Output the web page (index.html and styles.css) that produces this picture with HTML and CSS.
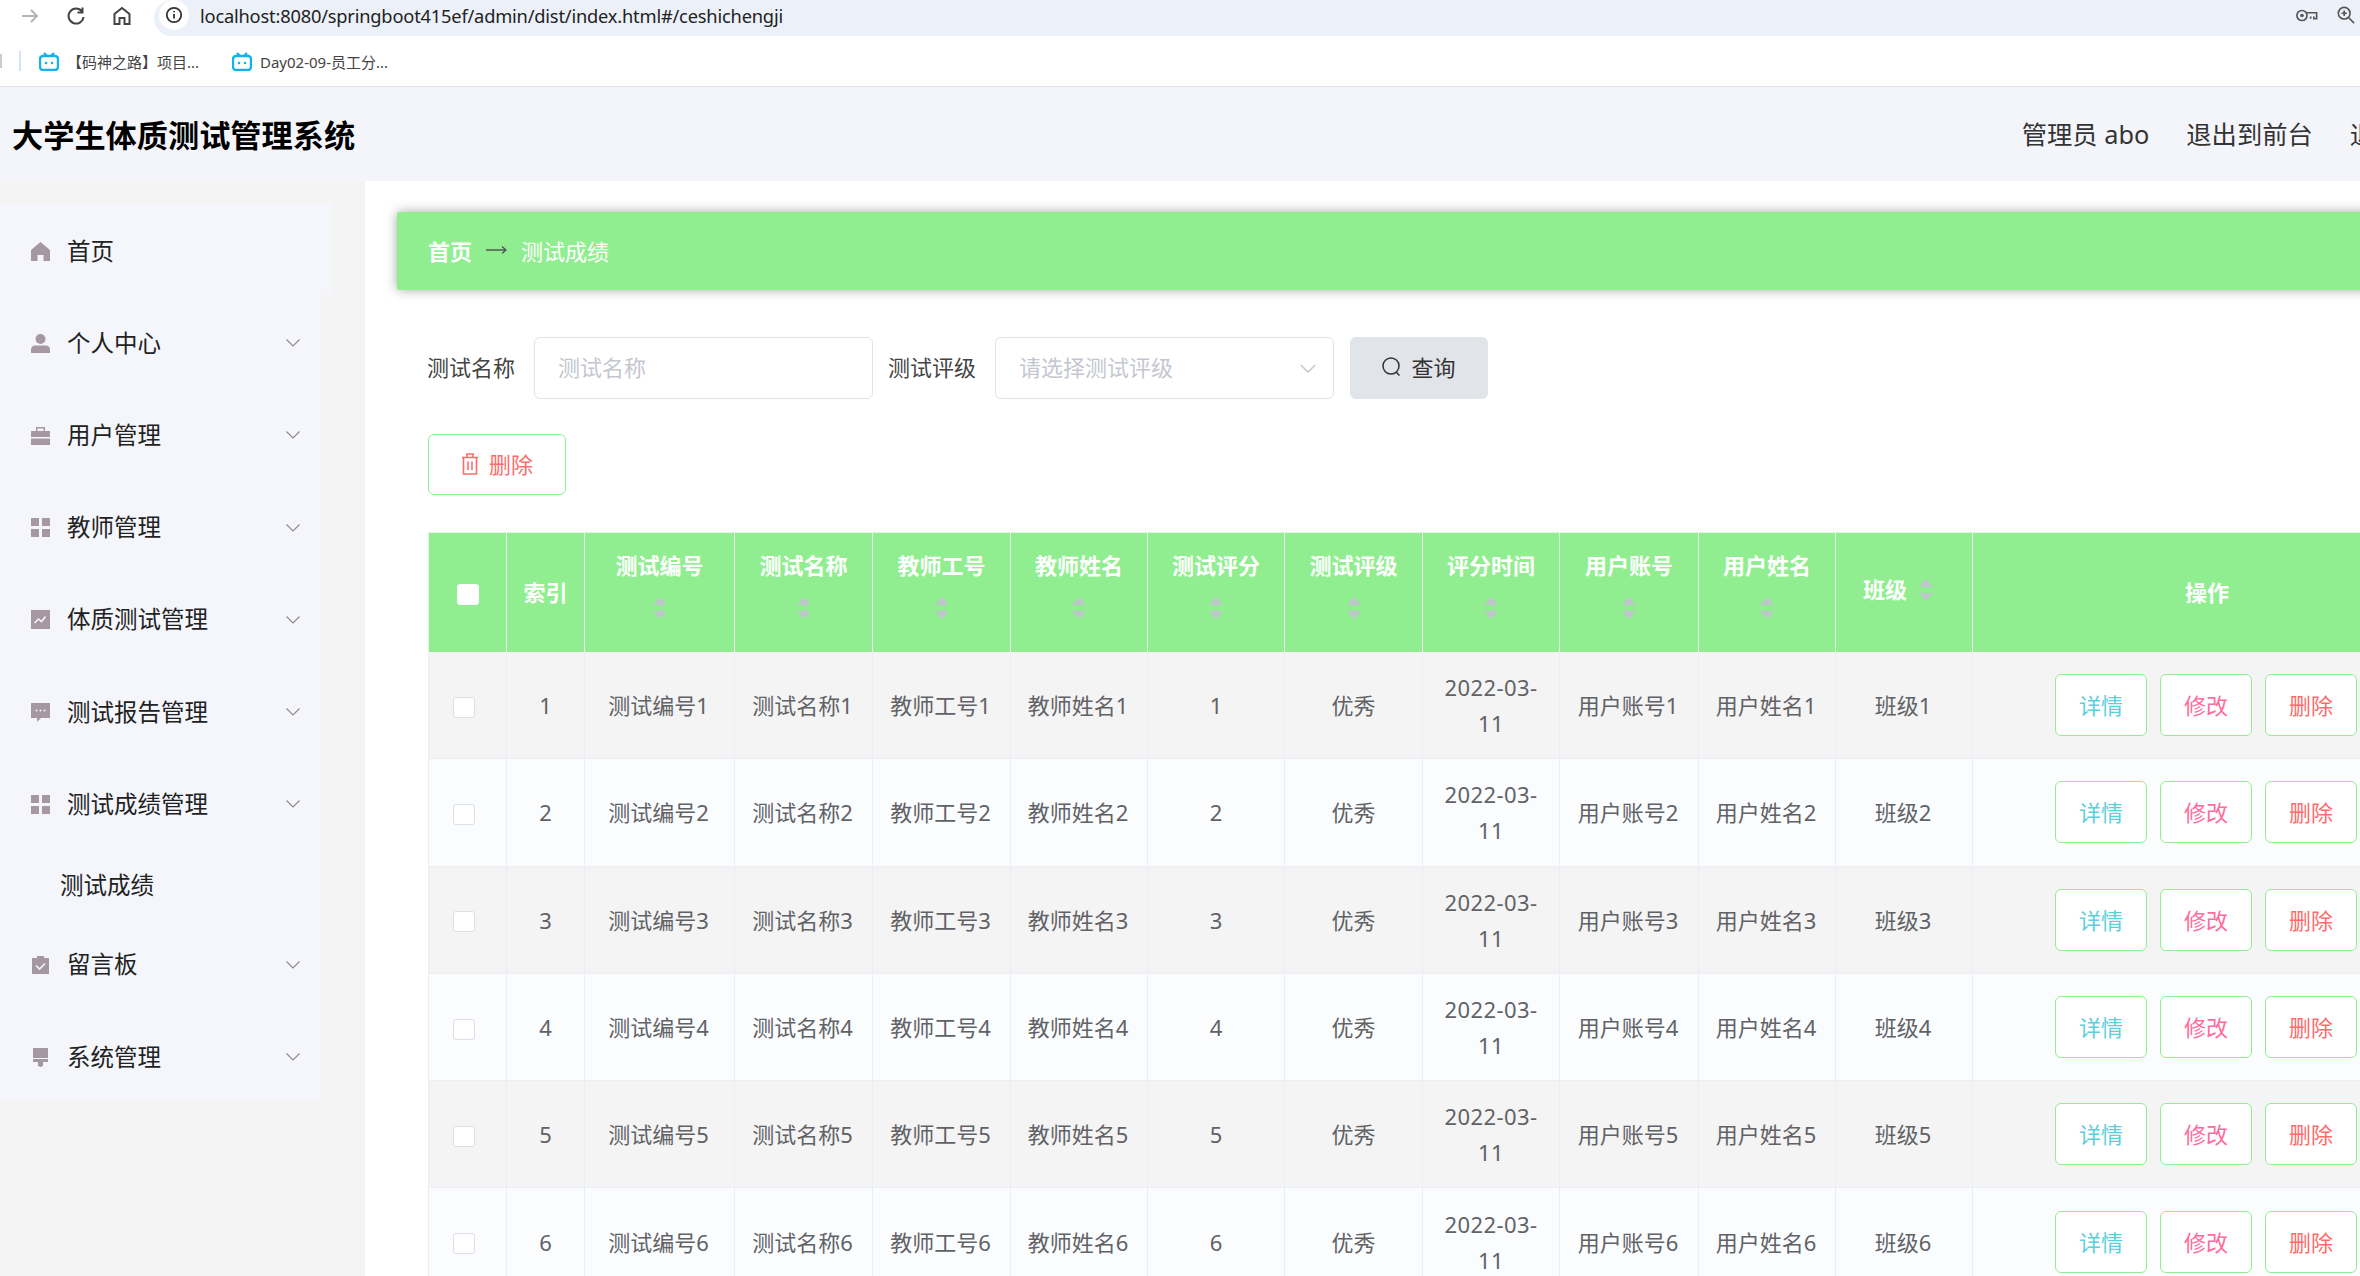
FILE: index.html
```html
<!DOCTYPE html>
<html lang="zh-CN">
<head>
<meta charset="utf-8">
<title>大学生体质测试管理系统</title>
<link rel="stylesheet" href="styles.css">
</head>
<body>
<div class="chrome-top">
  <div class="nav-icons">
    <svg class="nav-icon nav-back" viewBox="0 0 20 20"><path d="M2 10h15M11 4l6 6-6 6"/></svg>
    <svg class="nav-icon" viewBox="0 0 20 20"><path d="M16 5.5A7.5 7.5 0 1 0 17.5 11M16.5 1.5v5h-5"/></svg>
    <svg class="nav-icon" viewBox="0 0 20 20"><path d="M2.5 18V8L10 2l7.5 6v10h-5v-6h-5v6z"/></svg>
  </div>
  <div class="url-pill">
    <span class="info-badge"><svg class="info-icon" viewBox="0 0 20 20"><circle cx="10" cy="10" r="8"/><path d="M10 9v5M10 5.5v1.5"/></svg></span>
    <span class="url-text">localhost:8080/springboot415ef/admin/dist/index.html#/ceshichengji</span>
    <span class="url-tools">
      <svg class="tool-key" viewBox="0 0 24 14"><circle cx="6.5" cy="7" r="5.5"/><circle class="solid" cx="6.5" cy="7" r="2"/><path d="M12 4h10.5v6.5h-3V8M16 8v2.5"/></svg>
      <svg class="tool-zoom" viewBox="0 0 20 20"><circle cx="8" cy="8" r="6.5"/><path d="M13 13l6 6M8 5v6M5 8h6"/></svg>
    </span>
  </div>
</div>
<div class="bookmarks">
  <span class="bm-stub"></span>
  <span class="bm-sep"></span>
  <span class="bm-item"><svg class="bili" viewBox="0 0 20 19"><path class="ear" d="M5 1l3 3M15 1l-3 3"/><rect x="1" y="4" width="18" height="14" rx="3"/><circle class="dot" cx="7" cy="11" r="1.3"/><circle class="dot" cx="13" cy="11" r="1.3"/></svg>【码神之路】项目...</span>
  <span class="bm-item"><svg class="bili" viewBox="0 0 20 19"><path class="ear" d="M5 1l3 3M15 1l-3 3"/><rect x="1" y="4" width="18" height="14" rx="3"/><circle class="dot" cx="7" cy="11" r="1.3"/><circle class="dot" cx="13" cy="11" r="1.3"/></svg>Day02-09-员工分...</span>
</div>
<header class="topbar">
  <h1 class="brand">大学生体质测试管理系统</h1>
  <nav class="top-links">
    <span>管理员 abo</span>
    <span>退出到前台</span>
    <span>退出登录</span>
  </nav>
</header>
<div class="layout">
  <aside class="aside">
    <ul class="menu">
      <li class="menu-item menu-home"><svg class="mi" viewBox="0 0 19 19"><path d="M9.5 0L19 8v11h-6.5v-6h-6v6H0V8z"/></svg><span>首页</span></li>
      <li class="menu-item"><svg class="mi" viewBox="0 0 19 19"><circle cx="9.5" cy="5" r="5"/><path d="M0 19v-3.5C0 13 2 11.500 4 11.500h11c2 0 4 1.500 4 4V19z"/></svg><span>个人中心</span><svg class="chev" viewBox="0 0 14 8"><path d="M.5.5L7 7 13.500.5"/></svg></li>
      <li class="menu-item"><svg class="mi" viewBox="0 0 19 19"><path d="M5 5V1h9v4h-1.500V2.500h-6V5zM0 5h19v6H0zM0 12.500h19V19H0z"/></svg><span>用户管理</span><svg class="chev" viewBox="0 0 14 8"><path d="M.5.5L7 7 13.500.5"/></svg></li>
      <li class="menu-item"><svg class="mi" viewBox="0 0 19 19"><path d="M0 0h8v8H0zM11 0h8v8h-8zM0 11h8v8H0zM11 11h8v8h-8z"/></svg><span>教师管理</span><svg class="chev" viewBox="0 0 14 8"><path d="M.5.5L7 7 13.500.5"/></svg></li>
      <li class="menu-item"><svg class="mi" viewBox="0 0 19 19"><path d="M0 0h19v19H0z"/><path class="mi-cut" d="M3.500 13l4-4 3 2.500 4-5"/></svg><span>体质测试管理</span><svg class="chev" viewBox="0 0 14 8"><path d="M.5.5L7 7 13.500.5"/></svg></li>
      <li class="menu-item"><svg class="mi" viewBox="0 0 19 19"><path d="M0 0h19v15H10l-4 4v-4H0z"/><circle class="mi-dot" cx="5.500" cy="7.500" r="1"/><circle class="mi-dot" cx="9.500" cy="7.500" r="1"/><circle class="mi-dot" cx="13.500" cy="7.500" r="1"/></svg><span>测试报告管理</span><svg class="chev" viewBox="0 0 14 8"><path d="M.5.5L7 7 13.500.5"/></svg></li>
      <li class="menu-item"><svg class="mi" viewBox="0 0 19 19"><path d="M0 0h8v8H0zM11 0h8v8h-8zM0 11h8v8H0zM11 11h8v8h-8z"/></svg><span>测试成绩管理</span><svg class="chev" viewBox="0 0 14 8"><path d="M.5.5L7 7 13.500.5"/></svg></li>
      <li class="menu-sub">测试成绩</li>
      <li class="menu-item"><svg class="mi" viewBox="0 0 19 19"><path d="M1 3h5V1h7v2h5v16H1z"/><path class="mi-cut" d="M5 10.500l3.500 3.500 5.500-5.500"/></svg><span>留言板</span><svg class="chev" viewBox="0 0 14 8"><path d="M.5.5L7 7 13.500.5"/></svg></li>
      <li class="menu-item"><svg class="mi" viewBox="0 0 19 19"><path d="M2 0h15v10H2zM2 11h15v3h-5v4l-2.500 1L7 18v-4H2z"/></svg><span>系统管理</span><svg class="chev" viewBox="0 0 14 8"><path d="M.5.5L7 7 13.500.5"/></svg></li>
    </ul>
  </aside>
  <main class="main">
    <div class="crumb">
      <strong>首页</strong>
      <svg class="crumb-arrow" viewBox="0 0 21 10"><path d="M0 5h20M16 1.500L20 5l-4 3.500"/></svg>
      <span>测试成绩</span>
    </div>
    <form class="filters">
      <label class="f-label">测试名称</label>
      <div class="f-input f-name">测试名称</div>
      <label class="f-label">测试评级</label>
      <div class="f-input f-select">请选择测试评级<svg class="f-chev" viewBox="0 0 20 11"><path d="M1 1l9 9 9-9"/></svg></div>
      <button type="button" class="btn-search"><svg class="search-ic" viewBox="0 0 19 20"><circle cx="9" cy="9" r="8"/><path d="M14 15l3.500 3.500"/></svg>查询</button>
    </form>
    <button type="button" class="btn-remove"><svg class="trash" viewBox="0 0 18 22"><path d="M1 4.500h16M6 4.500V1h6v3.500M2.500 4.500V21h13V4.500M7 8.500v8.500M11 8.500v8.500"/></svg>删除</button>
    <table class="grid">
      <colgroup>
        <col class="c79"><col class="c78"><col class="c150"><col class="c138"><col class="c138"><col class="c137"><col class="c137"><col class="c138"><col class="c137"><col class="c139"><col class="c137"><col class="c137"><col class="c469">
      </colgroup>
      <thead>
        <tr>
          <th><span class="check check-head"></span></th>
          <th>索引</th>
          <th>测试编号<span class="sort"><i class="up"></i><i class="down"></i></span></th>
          <th>测试名称<span class="sort"><i class="up"></i><i class="down"></i></span></th>
          <th>教师工号<span class="sort"><i class="up"></i><i class="down"></i></span></th>
          <th>教师姓名<span class="sort"><i class="up"></i><i class="down"></i></span></th>
          <th>测试评分<span class="sort"><i class="up"></i><i class="down"></i></span></th>
          <th>测试评级<span class="sort"><i class="up"></i><i class="down"></i></span></th>
          <th>评分时间<span class="sort"><i class="up"></i><i class="down"></i></span></th>
          <th>用户账号<span class="sort"><i class="up"></i><i class="down"></i></span></th>
          <th>用户姓名<span class="sort"><i class="up"></i><i class="down"></i></span></th>
          <th>班级<span class="sort"><i class="up"></i><i class="down"></i></span></th>
          <th>操作</th>
        </tr>
      </thead>
      <tbody>
        <tr><td><span class="check"></span></td><td>1</td><td>测试编号1</td><td>测试名称1</td><td>教师工号1</td><td>教师姓名1</td><td>1</td><td>优秀</td><td class="date">2022-03-<br>11</td><td>用户账号1</td><td>用户姓名1</td><td>班级1</td><td><div class="ops"><button type="button" class="op op-view">详情</button><button type="button" class="op op-edit">修改</button><button type="button" class="op op-del">删除</button></div></td></tr>
        <tr><td><span class="check"></span></td><td>2</td><td>测试编号2</td><td>测试名称2</td><td>教师工号2</td><td>教师姓名2</td><td>2</td><td>优秀</td><td class="date">2022-03-<br>11</td><td>用户账号2</td><td>用户姓名2</td><td>班级2</td><td><div class="ops"><button type="button" class="op op-view">详情</button><button type="button" class="op op-edit">修改</button><button type="button" class="op op-del">删除</button></div></td></tr>
        <tr><td><span class="check"></span></td><td>3</td><td>测试编号3</td><td>测试名称3</td><td>教师工号3</td><td>教师姓名3</td><td>3</td><td>优秀</td><td class="date">2022-03-<br>11</td><td>用户账号3</td><td>用户姓名3</td><td>班级3</td><td><div class="ops"><button type="button" class="op op-view">详情</button><button type="button" class="op op-edit">修改</button><button type="button" class="op op-del">删除</button></div></td></tr>
        <tr><td><span class="check"></span></td><td>4</td><td>测试编号4</td><td>测试名称4</td><td>教师工号4</td><td>教师姓名4</td><td>4</td><td>优秀</td><td class="date">2022-03-<br>11</td><td>用户账号4</td><td>用户姓名4</td><td>班级4</td><td><div class="ops"><button type="button" class="op op-view">详情</button><button type="button" class="op op-edit">修改</button><button type="button" class="op op-del">删除</button></div></td></tr>
        <tr><td><span class="check"></span></td><td>5</td><td>测试编号5</td><td>测试名称5</td><td>教师工号5</td><td>教师姓名5</td><td>5</td><td>优秀</td><td class="date">2022-03-<br>11</td><td>用户账号5</td><td>用户姓名5</td><td>班级5</td><td><div class="ops"><button type="button" class="op op-view">详情</button><button type="button" class="op op-edit">修改</button><button type="button" class="op op-del">删除</button></div></td></tr>
        <tr><td><span class="check"></span></td><td>6</td><td>测试编号6</td><td>测试名称6</td><td>教师工号6</td><td>教师姓名6</td><td>6</td><td>优秀</td><td class="date">2022-03-<br>11</td><td>用户账号6</td><td>用户姓名6</td><td>班级6</td><td><div class="ops"><button type="button" class="op op-view">详情</button><button type="button" class="op op-edit">修改</button><button type="button" class="op op-del">删除</button></div></td></tr>
      </tbody>
    </table>
  </main>
</div>
</body>
</html>
```

FILE: styles.css
```css
* { box-sizing: border-box; }
html, body { margin: 0; padding: 0; height: 1276px; overflow: hidden; background: #fff; }
body { width: 2360px; font-family: "Noto Sans", "Noto Sans CJK SC", sans-serif; color: #333; }
ul { list-style: none; margin: 0; padding: 0; }

/* browser chrome */
.chrome-top { display: flex; height: 36px; background: #fff; }
.nav-icons { display: flex; align-items: center; width: 154px; padding: 0 0 5px 20px; gap: 26px; }
.nav-icon { width: 20px; height: 20px; fill: none; stroke: #444; stroke-width: 2; }
.nav-back { stroke: #b4b4b4; }
.url-pill { flex: 1; display: flex; align-items: center; padding-bottom: 6px; background: #ebf0f9; border-top-left-radius: 18px; border-bottom-left-radius: 18px; }
.info-badge { width: 30px; height: 30px; margin-left: 5px; margin-right: 1px; border-radius: 50%; background: #fff; display: flex; align-items: center; justify-content: center; }
.info-icon { width: 18px; height: 18px; fill: none; stroke: #333; stroke-width: 2; }
.url-text { margin-left: 10px; font-size: 18.300px; color: #222; white-space: nowrap; letter-spacing: -.2px; }
.url-tools { margin-left: auto; display: flex; align-items: center; gap: 19px; padding-right: 5px; }
.tool-key { width: 22px; height: 13px; fill: none; stroke: #555; stroke-width: 1.8; }
.tool-key .solid { fill: #555; stroke: none; }
.tool-zoom { width: 18px; height: 18px; fill: none; stroke: #555; stroke-width: 1.8; }

.bookmarks { display: flex; align-items: center; height: 51px; border-bottom: 1px solid #e2e3e6; background: #fff; font-size: 15px; color: #444; }
.bm-stub { width: 2px; height: 14px; background: #ccc; }
.bm-sep { width: 2px; height: 20px; background: #d5e2f7; margin-left: 17px; margin-right: 18px; }
.bm-item { display: flex; align-items: center; gap: 8px; width: 193px; white-space: nowrap; }
.bili { width: 20px; height: 19px; fill: none; stroke: #0fb4ee; stroke-width: 2.4; flex: none; }
.bili .dot { fill: #0fb4ee; stroke: none; }

/* top bar */
.topbar { display: flex; align-items: center; justify-content: space-between; height: 94px; background: #f4f5fa; padding-left: 12px; overflow: hidden; }
.brand { margin: 0; padding-top: 2px; font-size: 31.200px; font-weight: 700; color: #000; line-height: 40px; white-space: nowrap; }
.top-links { display: flex; gap: 37px; margin-right: -91px; flex: none; font-size: 25.300px; color: #333; line-height: 36px; }
.top-links span { white-space: nowrap; }

/* layout */
.layout { display: flex; height: 1095px; }
.aside { width: 365px; flex: none; background: #f4f4f4; padding-top: 22px; }
.menu { width: 320px; background: #f4f6fb; padding-bottom: 1px; }
.menu-item { display: flex; align-items: center; height: 92.200px; padding: 4px 20px 0 31px; font-size: 23.500px; color: #222; }
.menu-item span { margin-top: -3px; }
.menu-home { width: 333px; background: #f4f6fb; }
.mi { width: 19px; height: 19px; fill: #a598a2; flex: none; margin-right: 17px; }
.mi-cut { fill: none; stroke: #f4f6fb; stroke-width: 1.600; }
.mi-dot { fill: #f4f6fb; }
.chev { width: 14px; height: 8px; margin-left: auto; fill: none; stroke: #8f8592; stroke-width: 1.100; }
.menu-sub { height: 68.500px; padding: 2px 0 0 60px; display: flex; align-items: center; font-size: 23.500px; color: #222; }

/* main */
.main { flex: 1; min-width: 0; overflow: hidden; padding: 31px 0 0 32px; background: #fff; }
.crumb { display: flex; align-items: center; width: 2100px; height: 78px; padding: 0 0 2px 31px; background: #90ee90; border-radius: 2px; box-shadow: 0 0 12px rgba(0,0,0,.35); color: #fff; font-size: 22px; }
.crumb strong { font-weight: 700; }
.crumb-arrow { width: 21px; height: 10px; margin: 0 14px; fill: none; stroke: #555; stroke-width: 1.500; }

.filters { display: flex; align-items: center; margin: 47px 0 0 30px; font-size: 22px; }
.f-label { color: #444; width: 107px; padding-bottom: 5px; white-space: nowrap; }
.f-input { height: 62px; border: 1px solid #dfe3ea; border-radius: 6px; background: #fff; color: #c4c7cf; display: flex; align-items: center; padding: 0 0 5px 23px; }
.f-name { width: 339px; margin-right: 15px; }
.f-select { width: 339px; margin-right: 16px; justify-content: space-between; padding-right: 17px; }
.f-chev { width: 16px; height: 9px; fill: none; stroke: #c4c7cf; stroke-width: 1.800; margin-top: 5px; }
.btn-search { display: flex; align-items: center; justify-content: center; gap: 10px; width: 138px; height: 62px; border: 1px solid #e1e4e8; border-radius: 6px; background: #e1e4e8; font: inherit; color: #333; padding: 0 0 4px; }
.search-ic { width: 19px; height: 20px; margin-top: 2px; fill: none; stroke: #333; stroke-width: 1.500; }

.btn-remove { display: flex; align-items: center; justify-content: center; gap: 10px; width: 138px; height: 61px; margin: 35px 0 0 31px; border: 1px solid #90ee90; border-radius: 6px; background: #fff; color: #ff6b6b; font-family: inherit; font-size: 22px; padding: 0 0 4px; }
.trash { width: 18px; height: 22px; margin-top: 2px; fill: none; stroke: #ff6b6b; stroke-width: 1.600; }

/* table */
.grid { table-layout: fixed; width: 2014px; margin: 37px 0 0 31px; border-collapse: separate; border-spacing: 0; font-size: 22px; }
.c78 { width: 78px; } .c79 { width: 79px; } .c137 { width: 137px; } .c138 { width: 138px; } .c139 { width: 139px; } .c150 { width: 150px; } .c469 { width: 469px; }
.grid th { height: 120px; padding: 0 18px 2px; background: #90ee90; color: #fff; font-weight: 700; line-height: 36px; text-align: center; border-top: 1px solid #dff3df; border-right: 1px solid #e8f8e8; vertical-align: middle; }
.grid th:first-child, .grid td:first-child { border-left: 1px solid #ebeef5; }
.grid th:nth-child(-n+2) { padding: 0 0 2px; }
.grid th:nth-child(3) { padding: 0 30px 2px; }
.grid td { height: 107.300px; padding: 0 8px 0 6px; text-align: center; color: #606266; line-height: 36px; border-right: 1px solid #ebeef5; border-bottom: 1px solid #ebeef5; vertical-align: middle; }
.grid tbody tr:nth-child(odd) td { background: #f4f4f4; }
.grid tbody tr:nth-child(even) td { background: #fbfcfe; }
.grid td:first-child { padding: 0 8px 2px 0; }
.grid td:nth-child(2), .grid td:nth-child(7), .grid td:nth-child(8), .grid td:nth-child(9) { padding: 0 6px; }
.date { letter-spacing: .4px; }
.check { display: inline-block; width: 22px; height: 21px; background: #fff; border: 1px solid #dcdfe6; border-radius: 3px; vertical-align: middle; }
.check-head { border-color: #fff; }
.sort { display: inline-flex; flex-direction: column; align-items: center; justify-content: center; gap: 6px; width: 14px; height: 50px; margin: 0 12px 4px; vertical-align: middle; }
.sort i { display: block; width: 0; height: 0; border-left: 7px solid transparent; border-right: 7px solid transparent; }
.sort .up { border-bottom: 8px solid #c0c4cc; }
.sort .down { border-top: 8px solid #c0c4cc; }
.ops { display: flex; justify-content: center; gap: 13px; }
.op { width: 92px; height: 62px; padding: 0 0 2px; background: #fff; border: 1px solid #90ee90; border-radius: 6px; font-family: inherit; font-size: 22px; }
.op-view { color: #5bcfdc; }
.op-edit { color: #ff6b9c; }
.op-del { color: #ff6b6b; }
```
